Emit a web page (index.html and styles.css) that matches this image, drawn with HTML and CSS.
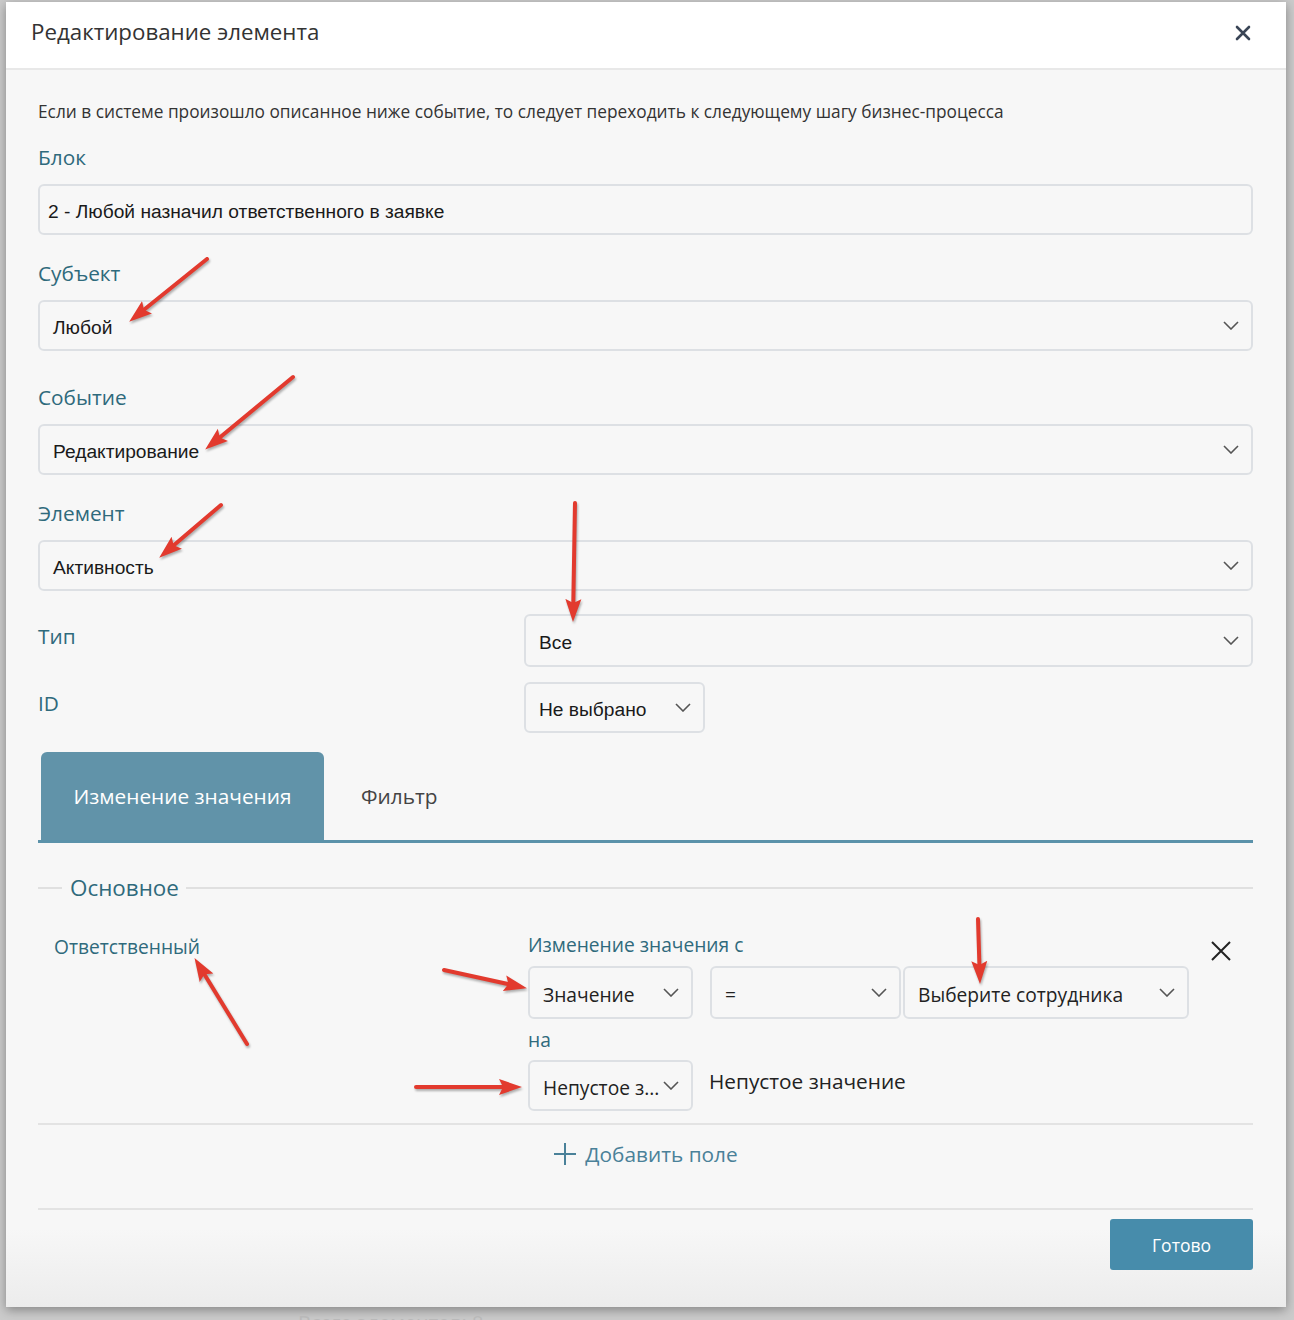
FILE: index.html
```html
<!DOCTYPE html>
<html lang="ru">
<head>
    <meta charset="UTF-8">
    <title>Редактирование элемента</title>
    <link rel="stylesheet" href="styles.css">
</head>
<body>
    <div class="page">
        <div class="modal">
            <div class="modal-header">
                <h1 class="modal-title">Редактирование элемента</h1>
                <button class="modal-close">
                    <svg width="16" height="16" viewBox="0 0 16 16"><path d="M2 2L14 14M14 2L2 14" stroke="#3a4556" stroke-width="2.6" stroke-linecap="round"/></svg>
                </button>
            </div>

            <div class="modal-body">
                <p class="hint">Если в системе произошло описанное ниже событие, то следует переходить к следующему шагу бизнес-процесса</p>

                <div class="field">
                    <div class="label">Блок</div>
                    <div class="input">2 - Любой назначил ответственного в заявке</div>
                </div>

                <div class="field">
                    <div class="label">Субъект</div>
                    <div class="select">
                        <span>Любой</span>
                        <svg class="chev" viewBox="0 0 16 9"><path d="M1 1l7 7 7-7"/></svg>
                    </div>
                </div>

                <div class="field field-wide">
                    <div class="label">Событие</div>
                    <div class="select">
                        <span>Редактирование</span>
                        <svg class="chev" viewBox="0 0 16 9"><path d="M1 1l7 7 7-7"/></svg>
                    </div>
                </div>

                <div class="field">
                    <div class="label">Элемент</div>
                    <div class="select">
                        <span>Активность</span>
                        <svg class="chev" viewBox="0 0 16 9"><path d="M1 1l7 7 7-7"/></svg>
                    </div>
                </div>

                <div class="row row-type">
                    <div class="label">Тип</div>
                    <div class="select select-tall">
                        <span>Все</span>
                        <svg class="chev" viewBox="0 0 16 9"><path d="M1 1l7 7 7-7"/></svg>
                    </div>
                </div>

                <div class="row row-id">
                    <div class="label">ID</div>
                    <div class="select select-id">
                        <span>Не выбрано</span>
                        <svg class="chev" viewBox="0 0 16 9"><path d="M1 1l7 7 7-7"/></svg>
                    </div>
                </div>

                <div class="tabs">
                    <div class="tab active">Изменение значения</div>
                    <div class="tab">Фильтр</div>
                </div>

                <div class="legend">
                    <span class="legend-line short"></span>
                    <span class="legend-text">Основное</span>
                    <span class="legend-line"></span>
                </div>

                <div class="cond">
                    <div class="cond-name">Ответственный</div>
                    <div class="cond-body">
                        <div class="cond-caption">Изменение значения с</div>
                        <div class="cond-selects">
                            <div class="select select-sm w-value">
                                <span>Значение</span>
                                <svg class="chev" viewBox="0 0 16 9"><path d="M1 1l7 7 7-7"/></svg>
                            </div>
                            <div class="select select-sm w-op">
                                <span>=</span>
                                <svg class="chev" viewBox="0 0 16 9"><path d="M1 1l7 7 7-7"/></svg>
                            </div>
                            <div class="select select-sm w-user">
                                <span>Выберите сотрудника</span>
                                <svg class="chev" viewBox="0 0 16 9"><path d="M1 1l7 7 7-7"/></svg>
                            </div>
                        </div>
                        <div class="cond-caption cond-to">на</div>
                        <div class="cond-selects">
                            <div class="select select-sm w-value second">
                                <span class="ellipsis">Непустое з...</span>
                                <svg class="chev" viewBox="0 0 16 9"><path d="M1 1l7 7 7-7"/></svg>
                            </div>
                            <div class="cond-value">Непустое значение</div>
                        </div>
                    </div>
                    <button class="cond-remove">
                        <svg width="20" height="20" viewBox="0 0 20 20"><path d="M1 1L19 19M19 1L1 19" stroke="#222" stroke-width="2"/></svg>
                    </button>
                </div>

                <div class="divider"></div>

                <div class="add-field">
                    <svg width="24" height="24" viewBox="0 0 24 24"><path d="M12 1V23M1 12H23" stroke="#4a8199" stroke-width="2"/></svg>
                    <span>Добавить поле</span>
                </div>
            </div>

            <div class="modal-footer">
                <button class="btn-done">Готово</button>
            </div>
        </div>
        <div class="behind">Всего элементов: 8</div>
    </div>

    <svg class="arrows" width="1294" height="1320" viewBox="0 0 1294 1320">
        <defs>
            <marker id="head" markerUnits="userSpaceOnUse" markerWidth="24" markerHeight="18" viewBox="0 0 24 18" refX="10" refY="9" orient="auto">
                <path d="M0 1L23 9L0 17L4 9Z" fill="#e23a2e"/>
            </marker>
        </defs>
        <g stroke="#e23a2e" stroke-width="4" stroke-linecap="round" marker-end="url(#head)">
            <line x1="207" y1="259" x2="139.3" y2="313.5"/>
            <line x1="293" y1="377" x2="215.2" y2="441.3"/>
            <line x1="221" y1="505" x2="169.1" y2="549.2"/>
            <line x1="575" y1="503" x2="573.2" y2="609"/>
            <line x1="247" y1="1044" x2="201.3" y2="969.2"/>
            <line x1="444" y1="970" x2="514.3" y2="985.4"/>
            <line x1="416" y1="1087" x2="509" y2="1087"/>
            <line x1="978" y1="919" x2="979.6" y2="971"/>
        </g>
    </svg>
</body>
</html>
```

FILE: styles.css
```css
body {
    margin: 0;
    background: #cbcbcb;
    font-family: "Open Sans", "Liberation Sans", sans-serif;
    color: #333;
    overflow: hidden;
    height: 1320px;
    position: relative;
}

.page {
    padding: 2px 8px 0 6px;
}

.modal {
    width: 1280px;
    background: linear-gradient(to bottom, #f7f7f7 94%, #ececec);
    box-shadow: 0 3px 10px rgba(0,0,0,0.35);
}

.modal-header {
    height: 66px;
    box-sizing: content-box;
    display: flex;
    align-items: center;
    justify-content: space-between;
    padding: 0 35px 0 25px;
    background: #fff;
    border-bottom: 2px solid #e8e8e8;
}

.modal-title {
    margin: -7px 0 0;
    font-size: 22.3px;
    font-weight: 400;
    color: #333;
}

.modal-close {
    margin-top: -4px;
}

.modal-close,
.cond-remove {
    background: none;
    border: none;
    padding: 0;
    display: flex;
    cursor: pointer;
}

.modal-body {
    padding: 31px 33px 0 32px;
}

.hint {
    margin: 0;
    font-size: 17.3px;
    line-height: 22px;
    color: #333;
}

.label {
    font-size: 20.8px;
    line-height: 28px;
    color: #2f6a7c;
}

.field {
    margin-top: 24px;
}

    .field:first-of-type {
        margin-top: 20px;
    }

    .field .label {
        margin-bottom: 13px;
    }

.field-wide {
    margin-top: 32px;
}

.input,
.select {
    box-sizing: border-box;
    height: 51px;
    border: 2px solid #dde0e4;
    border-radius: 6px;
    background: #f7f7f7;
    font-family: "Liberation Sans", Arial, sans-serif;
    font-size: 19.2px;
    color: #1a1a1a;
    display: flex;
    align-items: center;
}

    .input > span,
    .select > span {
        padding-top: 5px;
    }

.input {
    padding: 5px 8px 0;
}

.select {
    justify-content: space-between;
    padding: 0 12px 0 13px;
}

.chev {
    width: 16px;
    height: 9px;
    flex: none;
    fill: none;
    stroke: #555;
    stroke-width: 1.6;
}

.row {
    display: grid;
    grid-template-columns: 486px 1fr;
    align-items: center;
}

    .row .label {
        margin-top: -9px;
    }

.row-type {
    margin-top: 23px;
}

.row-id {
    margin-top: 15px;
}

.select-tall {
    height: 53px;
}

.select-id {
    width: 181px;
}

.tabs {
    margin-top: 19px;
    display: flex;
    border-bottom: 3px solid #5b92aa;
}

.tab {
    height: 88px;
    display: flex;
    align-items: center;
    padding: 0 37px;
    font-size: 20.8px;
    color: #444;
}

    .tab.active {
        margin-left: 3px;
        width: 283px;
        box-sizing: border-box;
        justify-content: center;
        padding: 0;
        background: #6193a9;
        color: #fff;
        border-radius: 6px 6px 0 0;
    }

.legend {
    margin-top: 31px;
    display: flex;
    align-items: center;
}

.legend-line {
    flex: 1;
    height: 2px;
    background: #e0e0e0;
}

    .legend-line.short {
        flex: none;
        width: 24px;
    }

.legend-text {
    padding: 0 7px 0 8px;
    font-size: 22.4px;
    line-height: 28px;
    color: #2f6a7c;
}

.cond {
    margin-top: 31px;
    display: flex;
    align-items: flex-start;
}

.cond-name {
    width: 474px;
    padding: 2px 0 0 16px;
    font-size: 19.2px;
    line-height: 24px;
    color: #2f6a7c;
}

.cond-caption {
    font-size: 19.2px;
    line-height: 24px;
    color: #2f6a7c;
}

.cond-to {
    margin-top: 9px;
}

.cond-selects {
    display: flex;
    align-items: center;
    margin-top: 9px;
}

    .cond-to + .cond-selects {
        margin-top: 8px;
    }

.select-sm {
    height: 53px;
    font-family: "Open Sans", sans-serif;
    color: #222;
}

    .select-sm > span {
        padding-top: 3px;
    }

.w-value {
    width: 165px;
}

.w-op {
    width: 191px;
    margin-left: 17px;
}

.w-user {
    width: 286px;
    margin-left: 2px;
}

.select.second {
    height: 51px;
}

.ellipsis {
    white-space: nowrap;
}

.cond-value {
    margin: -10px 0 0 16px;
    font-size: 20.8px;
    color: #222;
}

.cond-remove {
    margin: 8px 0 0 22px;
}

.divider {
    margin-top: 12px;
    height: 2px;
    background: #e3e3e3;
}

.add-field {
    margin-top: 15px;
    display: flex;
    align-items: center;
    justify-content: center;
    gap: 8px;
    font-size: 20.8px;
    line-height: 28px;
    color: #4a8199;
}

.modal-footer {
    margin: 40px 33px 0 32px;
    padding: 9px 0 37px;
    border-top: 2px solid #e3e3e3;
    display: flex;
    justify-content: flex-end;
}

.btn-done {
    width: 143px;
    height: 51px;
    border: none;
    border-radius: 3px;
    background: #478cab;
    color: #fff;
    font-family: "Open Sans", sans-serif;
    font-size: 17.5px;
    cursor: pointer;
}

.behind {
    margin: 2px 0 0 292px;
    font-size: 20px;
    color: #b9b9b9;
}

.arrows {
    position: absolute;
    left: 0;
    top: 0;
    pointer-events: none;
    filter: drop-shadow(1px 2px 1px rgba(0,0,0,0.3));
}
```
